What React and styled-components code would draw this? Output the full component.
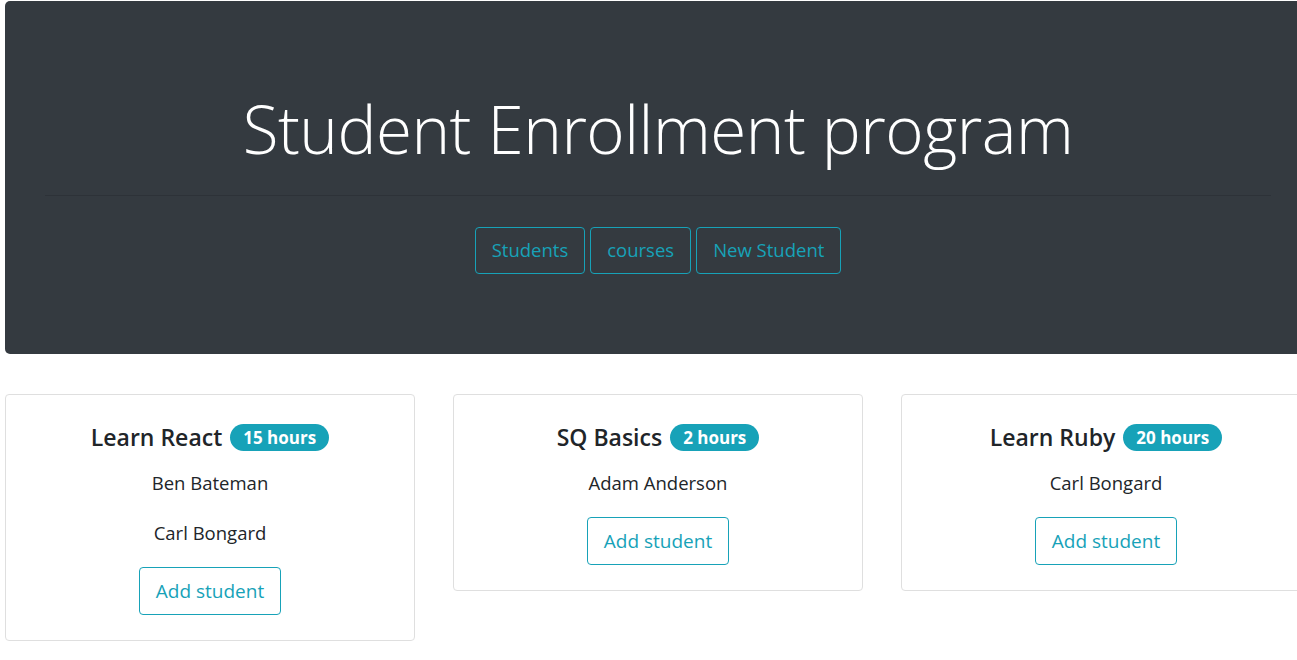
import React from 'react'
import styled, { createGlobalStyle } from 'styled-components'

const info = '#17a2b8'
const dark = '#343a40'
const text = '#212529'

const GlobalStyle = createGlobalStyle`
  html, body {
    margin: 0;
    padding: 0;
    background: #fff;
    overflow: hidden;
  }
  body {
    font-family: 'Open Sans', 'Noto Sans', sans-serif;
    color: ${text};
  }
  * {
    box-sizing: border-box;
  }
`

const Page = styled.div`
  width: 1306px;
  margin: 1px 0 0 5px;
`

const Jumbotron = styled.header`
  background: ${dark};
  border-radius: 5px;
  height: 353px;
  padding: 82px 40px 0;
  text-align: center;
`

const Title = styled.h1`
  margin: 0;
  font-size: 65.5px;
  font-weight: 300;
  line-height: 92px;
  color: #fff;
  letter-spacing: -0.5px;
`

const Rule = styled.hr`
  margin: 20px 0 31px;
  border: 0;
  border-top: 1px solid rgba(0, 0, 0, 0.12);
`

const Nav = styled.nav`
  display: flex;
  justify-content: center;
  gap: 5px;
`

const OutlineButton = styled.button`
  font-family: inherit;
  font-size: ${(p) => p.size || 18.5}px;
  line-height: 24px;
  color: ${info};
  background: transparent;
  border: 1px solid ${info};
  border-radius: 4px;
  padding: ${(p) => (p.tall ? '11px 16px' : '10px 16px 11px')};
  margin-top: ${(p) => (p.tall ? 19 : 0)}px;
  cursor: pointer;
`

const Cards = styled.section`
  display: flex;
  align-items: flex-start;
  gap: 38px;
  margin-top: 40px;
`

const Card = styled.article`
  flex: 0 0 410px;
  border: 1px solid #dfdfdf;
  border-radius: 4px;
  padding: 25px 24px 25px;
  display: flex;
  flex-direction: column;
  align-items: center;
  text-align: center;
`

const CardTitle = styled.h4`
  margin: 0 0 14px;
  display: flex;
  align-items: center;
  gap: 8px;
  font-size: 23px;
  font-weight: 600;
  line-height: 34px;
`

const Badge = styled.span`
  background: ${info};
  color: #fff;
  border-radius: 14px;
  font-size: 17px;
  font-weight: 700;
  line-height: 27px;
  padding: 0 13px;
`

const Student = styled.p`
  margin: 0;
  font-size: 18.5px;
  line-height: 30px;

  & + & {
    margin-top: 20px;
  }
`

const courses = [
  { name: 'Learn React', hours: 15, students: ['Ben Bateman', 'Carl Bongard'] },
  { name: 'SQ Basics', hours: 2, students: ['Adam Anderson'] },
  { name: 'Learn Ruby', hours: 20, students: ['Carl Bongard'] }
]

export default function App() {
  return (
    <Page>
      <GlobalStyle />
      <Jumbotron>
        <Title>Student Enrollment program</Title>
        <Rule />
        <Nav>
          <OutlineButton>Students</OutlineButton>
          <OutlineButton>courses</OutlineButton>
          <OutlineButton>New Student</OutlineButton>
        </Nav>
      </Jumbotron>
      <Cards>
        {courses.map((course) => (
          <Card key={course.name}>
            <CardTitle>
              {course.name}
              <Badge>{course.hours} hours</Badge>
            </CardTitle>
            {course.students.map((s) => (
              <Student key={s}>{s}</Student>
            ))}
            <OutlineButton tall size={19}>
              Add student
            </OutlineButton>
          </Card>
        ))}
      </Cards>
    </Page>
  )
}
